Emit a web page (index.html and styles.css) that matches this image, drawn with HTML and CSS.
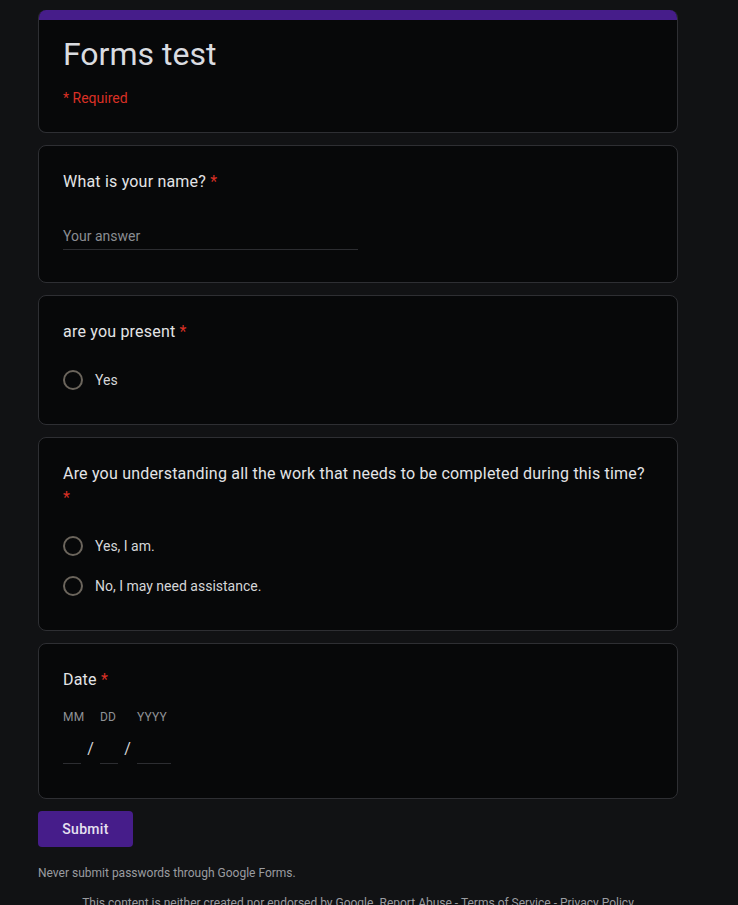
FILE: index.html
```html
<!DOCTYPE html>
<html lang="en">
<head>
<meta charset="utf-8">
<title>Forms test</title>
<link rel="stylesheet" href="styles.css">
</head>
<body>
<div class="page">
  <div class="card header-card">
    <div class="accent"></div>
    <div class="header-body">
      <h1 class="form-title">Forms test</h1>
      <div class="required-note">* Required</div>
    </div>
  </div>

  <div class="card question">
    <div class="q-title">What is your name? <span class="star">*</span></div>
    <div class="text-answer">Your answer</div>
  </div>

  <div class="card question">
    <div class="q-title">are you present <span class="star">*</span></div>
    <div class="options">
      <div class="option"><span class="radio"></span><span class="opt-label">Yes</span></div>
    </div>
  </div>

  <div class="card question">
    <div class="q-title">Are you understanding all the work that needs to be completed during this time? <span class="star">*</span></div>
    <div class="options">
      <div class="option"><span class="radio"></span><span class="opt-label">Yes, I am.</span></div>
      <div class="option"><span class="radio"></span><span class="opt-label">No, I may need assistance.</span></div>
    </div>
  </div>

  <div class="card question date-card">
    <div class="q-title">Date <span class="star">*</span></div>
    <div class="date-row">
      <div class="date-field f-mm"><div class="date-label">MM</div><div class="date-input"></div></div>
      <div class="date-sep">/</div>
      <div class="date-field f-dd"><div class="date-label">DD</div><div class="date-input"></div></div>
      <div class="date-sep">/</div>
      <div class="date-field f-yy"><div class="date-label">YYYY</div><div class="date-input"></div></div>
    </div>
  </div>

  <div class="actions">
    <button class="submit" type="button">Submit</button>
  </div>

  <p class="warning">Never submit passwords through Google Forms.</p>
  <p class="disclaimer">This content is neither created nor endorsed by Google. <a>Report Abuse</a> - <a>Terms of Service</a> - <a>Privacy Policy</a></p>
</div>
</body>
</html>
```

FILE: styles.css
```css
html, body {
  margin: 0;
  padding: 0;
  background: #111214;
}

body {
  font-family: Roboto, "Liberation Sans", Arial, sans-serif;
  color: #e3e3e3;
}

.page {
  width: 640px;
  margin-left: 38px;
  padding-top: 10px;
  display: flex;
  flex-direction: column;
}

.card {
  background: #070809;
  border: 1px solid #2e2f33;
  border-radius: 8px;
  box-sizing: border-box;
}

.header-card {
  border-top: none;
  overflow: hidden;
  margin-bottom: 12px;
}

.accent {
  height: 10px;
  background: #461d8a;
}

.header-body {
  padding: 14px 24px 24px 24px;
}

.form-title {
  margin: 0;
  font-family: Roboto, "Open Sans", sans-serif;
  font-weight: 400;
  font-size: 32px;
  line-height: 40px;
  color: #dadce0;
}

.required-note {
  margin-top: 14px;
  font-size: 14px;
  line-height: 20px;
  color: #d93025;
}

.question {
  padding: 24px;
  margin-bottom: 12px;
}

.q-title {
  font-size: 16px;
  line-height: 24px;
  color: #e3e4e6;
  letter-spacing: 0.2px;
}

.star {
  color: #d93025;
}

.text-answer {
  width: 50%;
  margin-top: 30px;
  margin-bottom: 8px;
  font-size: 14px;
  line-height: 24px;
  color: #8a8d92;
  border-bottom: 1px solid #2c2d31;
  padding-bottom: 1px;
}

.options {
  margin-top: 16px;
  display: flex;
  flex-direction: column;
}

.option {
  height: 40px;
  display: flex;
  align-items: center;
}

.radio {
  width: 16px;
  height: 16px;
  border: 2px solid #6b655c;
  border-radius: 50%;
  flex: none;
}

.opt-label {
  margin-left: 12px;
  font-size: 14px;
  color: #d5d6d8;
}

.date-row {
  margin-top: 17px;
  display: flex;
  align-items: flex-end;
  padding-bottom: 10px;
}

.date-field {
  display: flex;
  flex-direction: column;
}

.f-mm, .f-dd { width: 18px; }
.f-yy { width: 34px; }

.date-label {
  font-size: 12px;
  line-height: 16px;
  color: #8f9296;
  white-space: nowrap;
  letter-spacing: 0.2px;
}

.date-input {
  height: 38px;
  border-bottom: 1px solid #2c2d31;
}

.date-sep {
  width: 19px;
  text-align: center;
  font-size: 16px;
  line-height: 24px;
  color: #d5d6d8;
  margin-bottom: 3px;
}

.actions {
  display: flex;
}

.submit {
  width: 95px;
  height: 36px;
  border: none;
  border-radius: 4px;
  background: #461d8a;
  color: #e6e1f0;
  font-family: Roboto, "Open Sans", sans-serif;
  font-size: 14px;
  font-weight: 500;
  letter-spacing: 0.3px;
  padding: 0;
}

.warning {
  margin: 18px 0 0 0;
  font-size: 12px;
  line-height: 16px;
  color: #9a9ca0;
}

.disclaimer {
  margin: 14px 0 0 0;
  text-align: center;
  font-size: 12px;
  line-height: 16px;
  color: #9a9ca0;
}

.disclaimer a {
  color: #9a9ca0;
  text-decoration: none;
}
```
